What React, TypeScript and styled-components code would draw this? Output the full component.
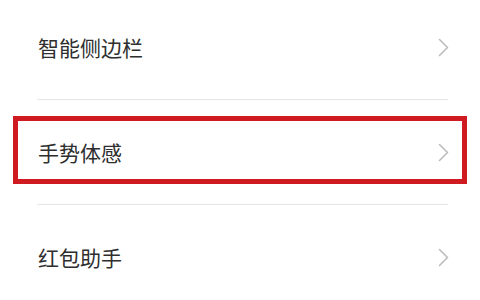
import React from 'react';
import styled, { createGlobalStyle } from 'styled-components';

const GlobalStyle = createGlobalStyle`
  html, body {
    margin: 0;
    padding: 0;
    background: #ffffff;
    overflow: hidden;
  }
  body {
    font-family: "Noto Sans CJK SC", "Noto Sans", sans-serif;
  }
`;

const items = [
  { label: '智能侧边栏', marked: false },
  { label: '手势体感', marked: true },
  { label: '红包助手', marked: false },
];

const Chevron = () => (
  <svg width="11" height="19" viewBox="0 0 11 19" fill="none">
    <polyline
      points="1.5,1.5 9.5,9.5 1.5,17.5"
      stroke="#bcbcbc"
      strokeWidth="1.6"
      strokeLinecap="round"
      strokeLinejoin="round"
    />
  </svg>
);

const App = () => {
  return (
    <>
      <GlobalStyle />
      <List>
        {items.map((item, index) => (
          <React.Fragment key={item.label}>
            {index > 0 && <Divider />}
            <Row $marked={item.marked}>
              <Label>{item.label}</Label>
              <Chevron />
            </Row>
          </React.Fragment>
        ))}
      </List>
    </>
  );
};

const List = styled.div`
  display: flex;
  flex-direction: column;
  margin-top: -5px;
  background: #ffffff;
`;

const Row = styled.div<{ $marked: boolean }>`
  position: relative;
  display: flex;
  align-items: center;
  justify-content: space-between;
  height: 104px;
  padding: 0 31px 0 38px;

  &::after {
    content: '';
    display: ${(p) => (p.$marked ? 'block' : 'none')};
    position: absolute;
    left: 13px;
    right: 13px;
    top: 16px;
    bottom: 20px;
    border: 5px solid #cf1a22;
  }
`;

const Label = styled.span`
  font-size: 21px;
  color: #2e2e2e;
  letter-spacing: 0;
`;

const Divider = styled.div`
  height: 1px;
  margin: 0 32px 0 37px;
  background: #e6e6e6;
`;

export default App;
